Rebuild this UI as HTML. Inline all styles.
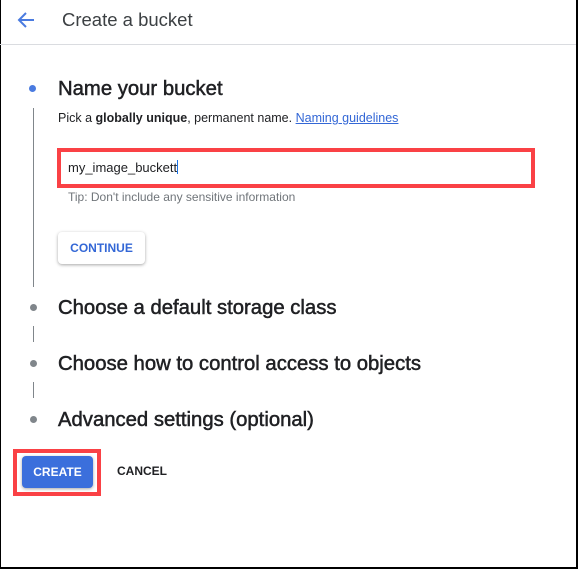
<!DOCTYPE html>
<html><head><style>
body{margin:0;width:578px;height:570px;overflow:hidden;background:#fff;font-family:"Liberation Sans",Arial,sans-serif;position:relative;color:#202124}
.a{position:absolute;white-space:nowrap}
.frame{position:absolute;left:0;top:0;width:575px;height:567px;border-left:1px solid #000;border-right:2px solid #000;border-bottom:2px solid #000}
.dot{position:absolute;width:7px;height:7px;border-radius:50%;background:#80868b}
.vl{position:absolute;left:33px;width:1px;background:#80868b}
.h{font-size:20.3px;color:#202124;-webkit-text-stroke:0.5px #202124}
</style></head><body>
<div class="frame"></div>
<svg class="a" style="left:16px;top:10px" width="20" height="20" viewBox="0 0 20 20"><path d="M18 10H3M10 3L3 10l7 7" fill="none" stroke="#4a7be0" stroke-width="2"/></svg>
<div class="a" style="left:62px;top:9px;font-size:18.5px;color:#3c4043">Create a bucket</div>
<div class="a" style="left:0;top:44px;width:576px;height:1px;background:#dadce0"></div>
<div class="dot" style="left:29px;top:85px;background:#4a7be0"></div>
<div class="a h" style="left:58px;top:78px">Name your bucket</div>
<div class="vl" style="top:108px;height:179px"></div>
<div class="a" style="left:58px;top:111px;font-size:12.5px">Pick a <b>globally unique</b>, permanent name. <span style="color:#3367d6;text-decoration:underline">Naming guidelines</span></div>
<div class="a" style="left:57px;top:148px;width:470px;height:32px;border:4px solid #fa4145"></div>
<div class="a" style="left:68px;top:160px;font-size:13px">my_image_buckett<span style="display:inline-block;width:1px;height:14px;background:#1a73e8;vertical-align:-2px"></span></div>
<div class="a" style="left:68px;top:190px;font-size:12px;color:#70757a">Tip: Don't include any sensitive information</div>
<div class="a" style="left:58px;top:232px;width:87px;height:32px;border-radius:4px;box-shadow:0 1px 3px rgba(0,0,0,.35);text-align:center;line-height:32px;font-size:12px;font-weight:bold;color:#3367d6">CONTINUE</div>
<div class="dot" style="left:30px;top:304px"></div>
<div class="a h" style="left:58px;top:297px">Choose a default storage class</div>
<div class="vl" style="top:326px;height:16px"></div>
<div class="dot" style="left:30px;top:360px"></div>
<div class="a h" style="left:58px;top:353px">Choose how to control access to objects</div>
<div class="vl" style="top:382px;height:16px"></div>
<div class="dot" style="left:30px;top:416px"></div>
<div class="a h" style="left:58px;top:409px">Advanced settings (optional)</div>
<div class="a" style="left:13px;top:449px;width:80px;height:39px;border:4px solid #fa4145"></div>
<div class="a" style="left:22px;top:456px;width:71px;height:32px;border-radius:4px;background:#3b6fdc;box-shadow:0 1px 3px rgba(0,0,0,.35);color:#fff;text-align:center;line-height:32px;font-size:12px;font-weight:bold">CREATE</div>
<div class="a" style="left:117px;top:464px;font-size:12px;font-weight:bold;color:#202124">CANCEL</div>
</body></html>
